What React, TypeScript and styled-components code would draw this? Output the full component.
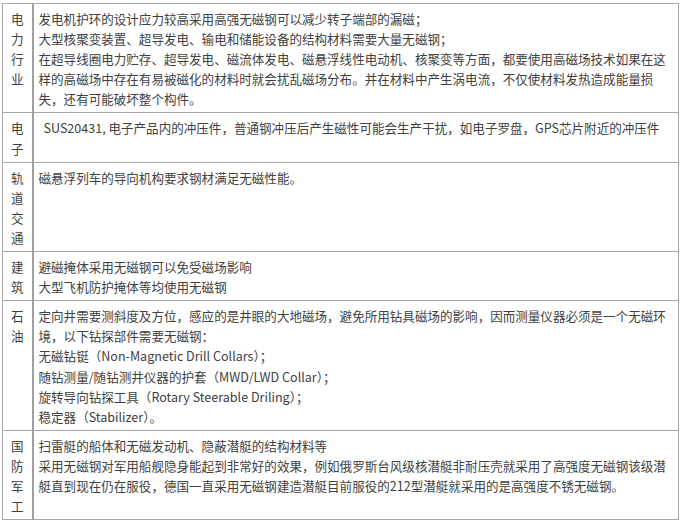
import React from 'react';
import styled, { createGlobalStyle } from 'styled-components';

const GlobalStyle = createGlobalStyle`
  body {
    margin: 0;
    background: #ffffff;
    font-family: "Noto Sans CJK SC", "Open Sans", sans-serif;
  }
`;

interface Section {
  label: string;
  lines: string[];
  indent?: boolean;
}

const sections: Section[] = [
  {
    label: '电力行业',
    lines: [
      '发电机护环的设计应力较高采用高强无磁钢可以减少转子端部的漏磁；',
      '大型核聚变装置、超导发电、输电和储能设备的结构材料需要大量无磁钢；',
      '在超导线圈电力贮存、超导发电、磁流体发电、磁悬浮线性电动机、核聚变等方面，都要使用高磁场技术如果在这',
      '样的高磁场中存在有易被磁化的材料时就会扰乱磁场分布。并在材料中产生涡电流，不仅使材料发热造成能量损',
      '失，还有可能破坏整个构件。',
    ],
  },
  {
    label: '电子',
    indent: true,
    lines: ['SUS20431, 电子产品内的冲压件，普通钢冲压后产生磁性可能会生产干扰，如电子罗盘，GPS芯片附近的冲压件'],
  },
  {
    label: '轨道交通',
    lines: ['磁悬浮列车的导向机构要求钢材满足无磁性能。'],
  },
  {
    label: '建筑',
    lines: ['避磁掩体采用无磁钢可以免受磁场影响', '大型飞机防护掩体等均使用无磁钢'],
  },
  {
    label: '石油',
    lines: [
      '定向井需要测斜度及方位，感应的是井眼的大地磁场，避免所用钻具磁场的影响，因而测量仪器必须是一个无磁环',
      '境，以下钻探部件需要无磁钢：',
      '无磁钻铤（Non-Magnetic Drill Collars）；',
      '随钻测量/随钻测井仪器的护套（MWD/LWD Collar）；',
      '旋转导向钻探工具（Rotary Steerable Driling）；',
      '稳定器（Stabilizer）。',
    ],
  },
  {
    label: '国防军工',
    lines: [
      '扫雷艇的船体和无磁发动机、隐蔽潜艇的结构材料等',
      '采用无磁钢对军用船舰隐身能起到非常好的效果，例如俄罗斯台风级核潜艇非耐压壳就采用了高强度无磁钢该级潜',
      '艇直到现在仍在服役，德国一直采用无磁钢建造潜艇目前服役的212型潜艇就采用的是高强度不锈无磁钢。',
    ],
  },
];

export default function App() {
  return (
    <Page>
      <GlobalStyle />
      <Table>
        <tbody>
          {sections.map((s) => (
            <Row key={s.label}>
              <LabelCell>
                {s.label.split('').map((ch, i) => (
                  <Line key={i}>{ch}</Line>
                ))}
              </LabelCell>
              <ContentCell $indent={s.indent}>
                {s.lines.map((l, i) => (
                  <Line key={i}>{l}</Line>
                ))}
              </ContentCell>
            </Row>
          ))}
        </tbody>
      </Table>
    </Page>
  );
}

const Page = styled.div`
  padding: 3px 0 0 2px;
`;

const Table = styled.table`
  width: 677px;
  border-collapse: collapse;
  border: 1px solid #a8a8a8;
  color: #414141;
  font-size: 12.55px;
`;

const Row = styled.tr`
  border-bottom: 1px solid #a8a8a8;
`;

const LabelCell = styled.td`
  width: 30px;
  box-sizing: border-box;
  padding: 5px 0 3px 0;
  text-align: center;
  vertical-align: top;
  border-right: 2px solid #a0a0a0;
`;

const ContentCell = styled.td<{ $indent?: boolean }>`
  padding: 5px 0 3px ${({ $indent }) => ($indent ? '10px' : '5px')};
  vertical-align: top;
`;

const Line = styled.div`
  line-height: 20.1px;
  height: 20.1px;
  white-space: nowrap;
`;
